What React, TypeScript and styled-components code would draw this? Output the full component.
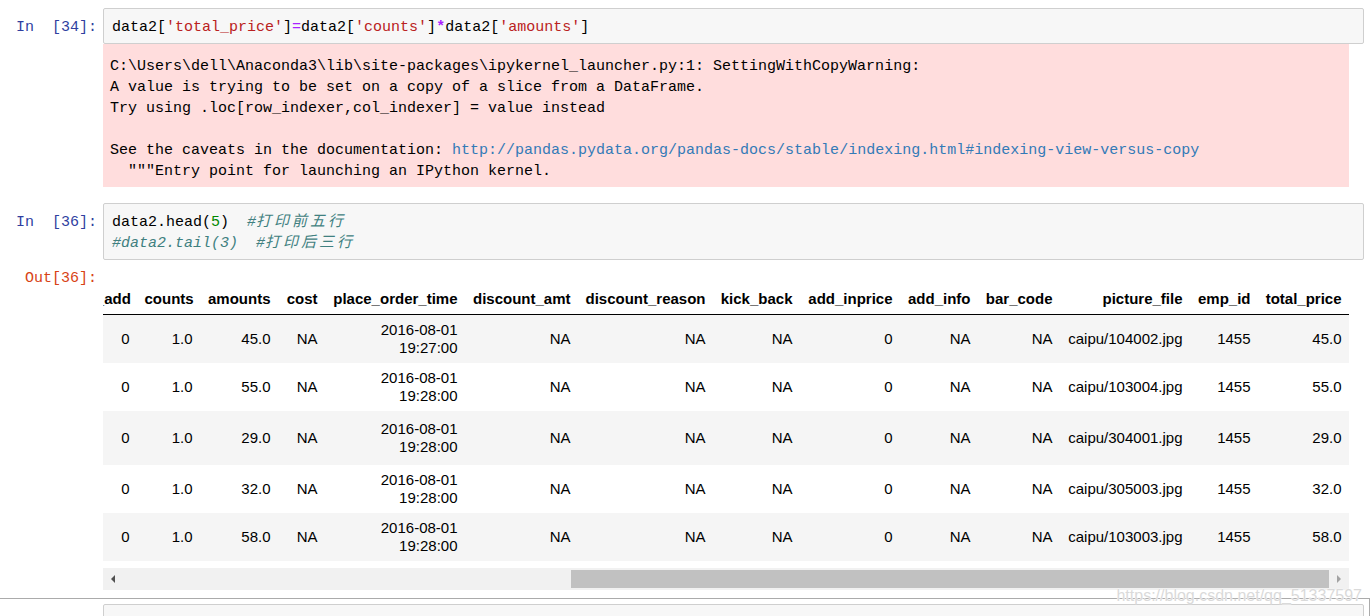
import React from 'react';
import styled, { createGlobalStyle } from 'styled-components';

const MONO = `"Liberation Mono", "Noto Sans CJK SC", monospace`;

const GlobalStyle = createGlobalStyle`
  html, body { margin: 0; padding: 0; background: #ffffff; }
  body { font-family: "Liberation Sans", Arial, sans-serif; overflow: hidden; }
`;

const Page = styled.div`
  position: relative;
  width: 1372px;
  height: 616px;
  overflow: hidden;
  box-sizing: border-box;
  padding: 2px 2px 0 0;
`;

const Cell = styled.div<{ $selected?: boolean }>`
  display: flex;
  flex-direction: column;
  border: 1px solid ${(p) => (p.$selected ? '#ababab' : 'transparent')};
  border-left: none;
  padding: 5px 5px 5px 0;
`;

const Row = styled.div<{ $pad?: number }>`
  display: flex;
  align-items: flex-start;
  padding-bottom: ${(p) => p.$pad ?? 0}px;
`;

const Prompt = styled.div<{ $out?: boolean; $top?: number }>`
  flex: none;
  width: 103px;
  box-sizing: border-box;
  padding: ${(p) => p.$top ?? 9}px 6px 0 0;
  text-align: right;
  white-space: pre;
  font-family: ${MONO};
  font-size: 15px;
  line-height: 21px;
  color: ${(p) => (p.$out ? '#d84315' : '#303f9f')};
`;

const InputArea = styled.div`
  flex: 1;
  min-width: 0;
  min-height: 21px;
  border: 1px solid #cfcfcf;
  border-radius: 2px;
  background: #f7f7f7;
  padding: 8px 8px 5px;
  font-family: ${MONO};
  font-size: 15px;
  line-height: 21px;
  color: #000;
  white-space: pre;
`;

const Str = styled.span`
  color: #ba2121;
`;
const Op = styled.span<{ $bold?: boolean }>`
  color: #aa22ff;
  font-weight: ${(p) => (p.$bold ? 700 : 400)};
`;
const Num = styled.span`
  color: #008800;
`;
const Comment = styled.span`
  color: #408080;
  font-style: italic;
`;
const Cjk = styled.span`
  font-family: "Noto Sans CJK SC", sans-serif;
  letter-spacing: 3px;
  line-height: 15px;
`;

const OutputBody = styled.div`
  flex: 1;
  min-width: 0;
  margin-right: 15px;
`;

const Stderr = styled.div`
  background: #ffdddd;
  padding: 12px 7px 5px;
  font-family: ${MONO};
  font-size: 15px;
  line-height: 21px;
  color: #000;
  white-space: pre;
`;

const Link = styled.a`
  color: #337ab7;
  text-decoration: none;
`;

const TableViewport = styled.div`
  display: flex;
  justify-content: flex-end;
  overflow: hidden;
  margin-top: 24px;
`;

const Table = styled.table<{ $w: number }>`
  flex: none;
  width: ${(p) => p.$w}px;
  table-layout: fixed;
  border-collapse: collapse;
  border-spacing: 0;
  font-family: "Liberation Sans", Arial, sans-serif;
  font-size: 15px;
  color: #000;
  tbody tr:nth-child(odd) { background: #f5f5f5; }
`;

const Col = styled.col<{ $w: number }>`
  width: ${(p) => p.$w}px;
`;

const Th = styled.th`
  padding: 6px 7.5px;
  line-height: 18px;
  font-weight: 700;
  text-align: right;
  white-space: nowrap;
  vertical-align: middle;
  border-bottom: 1px solid #000;
`;

const RowHead = styled.th<{ $tall?: boolean }>`
  padding: ${(p) => (p.$tall ? 9 : 6)}px 7.5px;
  line-height: 18px;
  font-weight: 700;
  text-align: right;
  white-space: nowrap;
`;

const Td = styled.td<{ $tall?: boolean }>`
  padding: ${(p) => (p.$tall ? 9 : 6)}px 7.5px;
  line-height: 18px;
  text-align: right;
  white-space: nowrap;
  vertical-align: middle;
`;

const ScrollBar = styled.div`
  display: flex;
  height: 22px;
  margin-top: 7px;
  background: #f1f1f1;
`;

const ArrowButton = styled.div`
  flex: none;
  width: 20px;
  display: flex;
  align-items: center;
  justify-content: center;
`;

const Track = styled.div<{ $offset: number }>`
  flex: 1;
  display: flex;
  align-items: center;
  padding-left: ${(p) => p.$offset}px;
`;

const Thumb = styled.div`
  flex: 1;
  height: 18px;
  background: #c1c1c1;
`;

const Watermark = styled.div`
  position: absolute;
  right: 10px;
  top: 587px;
  font-family: "Liberation Sans", Arial, sans-serif;
  font-size: 16px;
  line-height: 18px;
  color: #dadada;
  text-shadow: 0 0 1px #fff, 0 0 1px #fff;
  pointer-events: none;
`;

const columns: { name: string; w: number }[] = [
  { name: '', w: 30 },
  { name: 'detail_id', w: 82 },
  { name: 'order_id', w: 80 },
  { name: 'dishes_id', w: 86 },
  { name: 'logicprn_name', w: 122 },
  { name: 'parent_class_name', w: 160 },
  { name: 'itemis_add', w: 92 },
  { name: 'counts', w: 63 },
  { name: 'amounts', w: 78 },
  { name: 'cost', w: 47 },
  { name: 'place_order_time', w: 140 },
  { name: 'discount_amt', w: 113 },
  { name: 'discount_reason', w: 135 },
  { name: 'kick_back', w: 87 },
  { name: 'add_inprice', w: 100 },
  { name: 'add_info', w: 78 },
  { name: 'bar_code', w: 82 },
  { name: 'picture_file', w: 130 },
  { name: 'emp_id', w: 68 },
  { name: 'total_price', w: 91 },
];

const tableWidth = columns.reduce((s, c) => s + c.w, 0);

const rows = [
  { id: '2956', dish: '610062', amount: '45.0', time: '19:27:00', pic: 'caipu/104002.jpg' },
  { id: '2958', dish: '609957', amount: '55.0', time: '19:28:00', pic: 'caipu/103004.jpg' },
  { id: '2961', dish: '609950', amount: '29.0', time: '19:28:00', pic: 'caipu/304001.jpg', tall: true },
  { id: '2966', dish: '610038', amount: '32.0', time: '19:28:00', pic: 'caipu/305003.jpg' },
  { id: '2968', dish: '610003', amount: '58.0', time: '19:28:00', pic: 'caipu/103003.jpg' },
];

const warning = String.raw`C:\Users\dell\Anaconda3\lib\site-packages\ipykernel_launcher.py:1: SettingWithCopyWarning:
A value is trying to be set on a copy of a slice from a DataFrame.
Try using .loc[row_indexer,col_indexer] = value instead

See the caveats in the documentation: `;

function LeftArrow({ color }: { color: string }) {
  return (
    <svg width="6" height="8" viewBox="0 0 6 8">
      <polygon points="5,0 5,8 1,4" fill={color} />
    </svg>
  );
}

function RightArrow({ color }: { color: string }) {
  return (
    <svg width="6" height="8" viewBox="0 0 6 8">
      <polygon points="1,0 1,8 5,4" fill={color} />
    </svg>
  );
}

export default function App() {
  return (
    <Page>
      <GlobalStyle />
      <Cell>
        <Row>
          <Prompt>{'In  [34]:'}</Prompt>
          <InputArea>
            data2[<Str>'total_price'</Str>]<Op>=</Op>data2[<Str>'counts'</Str>]<Op $bold>*</Op>data2[<Str>'amounts'</Str>]
          </InputArea>
        </Row>
        <Row $pad={4}>
          <Prompt $top={0} />
          <OutputBody>
            <Stderr>
              {warning}
              <Link href="#">http://pandas.pydata.org/pandas-docs/stable/indexing.html#indexing-view-versus-copy</Link>
              {'\n  """Entry point for launching an IPython kernel.'}
            </Stderr>
          </OutputBody>
        </Row>
      </Cell>

      <Cell>
        <Row>
          <Prompt>{'In  [36]:'}</Prompt>
          <InputArea>
            data2.head(<Num>5</Num>)  <Comment>#<Cjk>打印前五行</Cjk></Comment>
            {'\n'}
            <Comment>#data2.tail(3)  #<Cjk>打印后三行</Cjk></Comment>
          </InputArea>
        </Row>
        <Row $pad={2}>
          <Prompt $out $top={8}>Out[36]:</Prompt>
          <OutputBody>
            <TableViewport>
              <Table $w={tableWidth}>
                <colgroup>
                  {columns.map((c, i) => (
                    <Col key={i} $w={c.w} />
                  ))}
                </colgroup>
                <thead>
                  <tr>
                    {columns.map((c, i) => (
                      <Th key={i}>{c.name}</Th>
                    ))}
                  </tr>
                </thead>
                <tbody>
                  {rows.map((r, i) => (
                    <tr key={r.id}>
                      <RowHead $tall={r.tall}>{i}</RowHead>
                      <Td $tall={r.tall}>{r.id}</Td>
                      <Td $tall={r.tall}>417</Td>
                      <Td $tall={r.tall}>{r.dish}</Td>
                      <Td $tall={r.tall}>NA</Td>
                      <Td $tall={r.tall}>NA</Td>
                      <Td $tall={r.tall}>0</Td>
                      <Td $tall={r.tall}>1.0</Td>
                      <Td $tall={r.tall}>{r.amount}</Td>
                      <Td $tall={r.tall}>NA</Td>
                      <Td $tall={r.tall}>
                        2016-08-01
                        <br />
                        {r.time}
                      </Td>
                      <Td $tall={r.tall}>NA</Td>
                      <Td $tall={r.tall}>NA</Td>
                      <Td $tall={r.tall}>NA</Td>
                      <Td $tall={r.tall}>0</Td>
                      <Td $tall={r.tall}>NA</Td>
                      <Td $tall={r.tall}>NA</Td>
                      <Td $tall={r.tall}>{r.pic}</Td>
                      <Td $tall={r.tall}>1455</Td>
                      <Td $tall={r.tall}>{r.amount}</Td>
                    </tr>
                  ))}
                </tbody>
              </Table>
            </TableViewport>
            <ScrollBar>
              <ArrowButton>
                <LeftArrow color="#505050" />
              </ArrowButton>
              <Track $offset={448}>
                <Thumb />
              </Track>
              <ArrowButton>
                <RightArrow color="#a3a3a3" />
              </ArrowButton>
            </ScrollBar>
          </OutputBody>
        </Row>
      </Cell>

      <Cell $selected>
        <Row>
          <Prompt />
          <InputArea />
        </Row>
      </Cell>

      <Watermark>https://blog.csdn.net/qq_51337597</Watermark>
    </Page>
  );
}
